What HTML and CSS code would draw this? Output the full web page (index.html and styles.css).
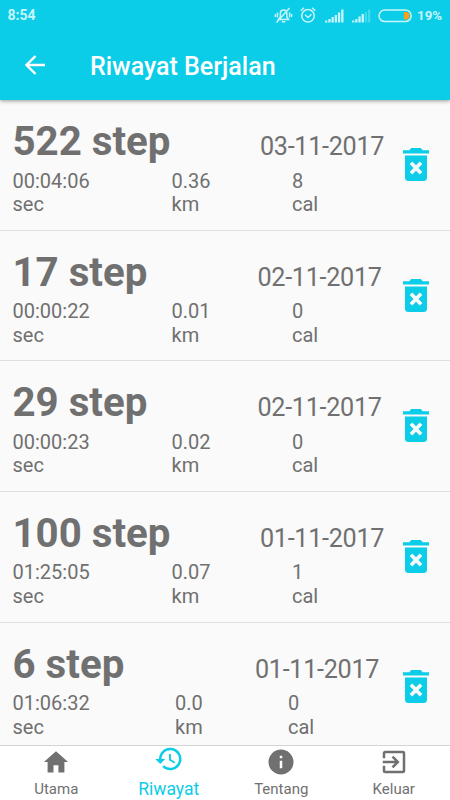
FILE: index.html
```html
<!DOCTYPE html>
<html lang="id">
<head>
<meta charset="utf-8">
<title>Riwayat Berjalan</title>
<link rel="stylesheet" href="styles.css">
</head>
<body>
<svg class="defs" width="0" height="0">
  <symbol id="trash" viewBox="0 0 26 33">
    <path d="M0 2.200h6.300L8.200 0h9.600l1.900 2.200H26V5.500H0z"/>
    <path fill-rule="evenodd" d="M2 7.500h22v22q0 3.500-3.500 3.500h-15Q2 33 2 29.500zM6.600 16l4 4-4 4 2.600 2.600 3.800-3.900 3.800 3.900 2.600-2.600-4-4 4-4-2.600-2.600-3.800 3.900-3.800-3.900z"/>
  </symbol>
</svg>
<div class="app">
  <header>
    <div class="status">
      <span class="clock">8:54</span>
      <svg class="system" viewBox="0 0 140 20" width="140" height="20">
        <g fill="none" stroke="#c7f5fb" stroke-width="1.500">
          <path d="M6.500 14.500h10l-1.700-2.500V8q0-3-3.200-3T8.400 8v4zM9.800 16.700h3.500M4.500 17.500 17.500 3M5.500 7.500v5M17.600 7.500v5M3.400 9v3M19.600 9v3"/>
          <circle cx="36" cy="10.800" r="6.300"/>
          <path d="m33 9.700 3 2.800 3.500-3.300M28.700 5.700l3.200-2.900M40.100 2.800l3.200 2.900"/>
        </g>
        <g fill="#c7f5fb">
          <path d="M53 15.500h2.300v2H53zM56.300 14h2.300v3.500h-2.300zM59.500 12h2.300v5.500h-2.300zM62.700 10H65v7.500h-2.300zM65.900 7.500h2.300v10h-2.300zM69.200 4.500h2.300v13h-2.300z"/>
          <path d="M80 15.500h2.300v2H80zM83.200 14h2.300v3.500h-2.300zM86.400 11.500h2.300v6h-2.300zM89.600 9h2.300v8.500h-2.300z"/>
          <path opacity=".3" d="M92.800 7h2.300v10.500h-2.300zM96 4.500h2.300v13H96z"/>
        </g>
        <rect x="107" y="5" width="32.200" height="11.600" rx="5.800" fill="none" stroke="#c7f5fb" stroke-width="1.500"/>
        <path fill="#ff9d17" d="M132 7h1.700q3.800 0 3.800 3.800t-3.800 3.800H132z"/>
      </svg>
      <span class="percent">19%</span>
    </div>
    <div class="toolbar">
      <svg class="back" viewBox="0 0 20 20" width="20" height="20"><path d="M20 10H2M10.500 1 1.500 10l9 9" fill="none" stroke="#fff" stroke-width="2.400"/></svg>
      <h1>Riwayat Berjalan</h1>
    </div>
  </header>
  <main>
    <article class="row">
      <div class="info">
        <div class="head"><h2>522 step</h2><time>03-11-2017</time></div>
        <div class="stats"><p>00:04:06<br>sec</p><p>0.36<br>km</p><p>8<br>cal</p></div>
      </div>
      <svg class="trash"><use href="#trash"/></svg>
    </article>
    <article class="row mid">
      <div class="info">
        <div class="head"><h2>17 step</h2><time>02-11-2017</time></div>
        <div class="stats"><p>00:00:22<br>sec</p><p>0.01<br>km</p><p>0<br>cal</p></div>
      </div>
      <svg class="trash"><use href="#trash"/></svg>
    </article>
    <article class="row mid">
      <div class="info">
        <div class="head"><h2>29 step</h2><time>02-11-2017</time></div>
        <div class="stats"><p>00:00:23<br>sec</p><p>0.02<br>km</p><p>0<br>cal</p></div>
      </div>
      <svg class="trash"><use href="#trash"/></svg>
    </article>
    <article class="row">
      <div class="info">
        <div class="head"><h2>100 step</h2><time>01-11-2017</time></div>
        <div class="stats"><p>01:25:05<br>sec</p><p>0.07<br>km</p><p>1<br>cal</p></div>
      </div>
      <svg class="trash"><use href="#trash"/></svg>
    </article>
    <article class="row short">
      <div class="info">
        <div class="head"><h2>6 step</h2><time>01-11-2017</time></div>
        <div class="stats"><p>01:06:32<br>sec</p><p>0.0<br>km</p><p>0<br>cal</p></div>
      </div>
      <svg class="trash"><use href="#trash"/></svg>
    </article>
  </main>
  <nav>
    <a><svg viewBox="0 0 30 30"><path d="M12.500 25.500v-7.200h4.900v7.200h6V15.100h3.700L15 4.200 2.900 15.100h3.700v10.400z"/></svg><span>Utama</span></a>
    <a class="active"><svg viewBox="0 0 24 24"><path d="M13 3a9 9 0 0 0-9 9H1l3.890 3.890.07.14L9 12H6a7 7 0 1 1 2.060 4.940l-1.420 1.420A9 9 0 1 0 13 3zm-1 5v5l4.280 2.540.72-1.210-3.500-2.080V8z"/></svg><span>Riwayat</span></a>
    <a><svg viewBox="0 0 24 24"><path d="M12 2a10 10 0 1 0 0 20 10 10 0 0 0 0-20zm1 15h-2v-6h2zm0-8h-2V7h2z"/></svg><span>Tentang</span></a>
    <a><svg viewBox="0 0 24 24"><path d="M10.090 15.590 11.500 17l5-5-5-5-1.410 1.410L12.670 11H3v2h9.670zM19 3H5a2 2 0 0 0-2 2v4h2V5h14v14H5v-4H3v4a2 2 0 0 0 2 2h14a2 2 0 0 0 2-2V5a2 2 0 0 0-2-2z"/></svg><span>Keluar</span></a>
  </nav>
</div>
</body>
</html>
```

FILE: styles.css
```css
* { box-sizing: border-box; }
body { margin: 0; font-family: Roboto, "Liberation Sans", sans-serif; color: #707070; background: #fafafa; }
h1, h2, p { margin: 0; }
.defs { position: absolute; }
.app { height: 800px; display: flex; flex-direction: column; overflow: hidden; }

header { flex: none; height: 100px; background: #0bcde8; box-shadow: 0 1px 4px rgba(0, 0, 0, .4); z-index: 1; }
.status { height: 30px; display: flex; align-items: center; padding: 0 8px 0 7.500px; color: #c7f5fb; font-size: 14px; font-weight: 700; }
.clock { flex: 1; }
.system { flex: none; margin-right: 5px; margin-top: -1px; }
.percent { width: 25px; white-space: nowrap; font-size: 13.300px; }
.toolbar { height: 70px; display: flex; align-items: center; padding-left: 25px; color: #fff; }
.back { flex: none; margin-right: 45px; margin-top: -1px; }
h1 { font-size: 25px; font-weight: 500; line-height: 30px; white-space: nowrap; margin-top: 4px; }

main { flex: 1; min-height: 0; overflow: hidden; }
.row { height: 130.650px; display: grid; grid-template-columns: 402.500px 1fr; border-bottom: 1px solid #dedede; --date: 260px; --km: 171.500px; --cal: 292px; }
.mid { --date: 257.500px; }
.short { --date: 255px; --km: 175px; --cal: 288px; }
.info { padding-top: 18px; }
.head { display: grid; grid-template-columns: var(--date) 1fr; align-items: baseline; height: 51.500px; }
h2 { padding-left: 12.500px; font-size: 40.250px; line-height: 47px; font-weight: 700; }
time { font-size: 25.200px; letter-spacing: -.3px; white-space: nowrap; }
.stats { display: grid; grid-template-columns: var(--km) calc(var(--cal) - var(--km)) 1fr; font-size: 20px; line-height: 23.500px; }
.stats p:first-child { padding-left: 12.500px; }
.trash { width: 26px; height: 33px; margin-top: 47.900px; fill: #0bcde8; }

nav { flex: none; height: 55px; border-top: 1px solid #d4d4d4; background: #fff; display: grid; grid-template-columns: repeat(4, 1fr); font-size: 15px; }
nav a { display: flex; flex-direction: column; align-items: center; }
nav svg { width: 30px; height: 30px; margin-top: 1px; fill: #707070; }
nav span { line-height: 20px; margin-top: 2px; }
.active { color: #0bcde8; font-size: 17.500px; }
.active svg { fill: #0bcde8; margin-top: -2px; }
.active span { margin-top: 5px; }
```
